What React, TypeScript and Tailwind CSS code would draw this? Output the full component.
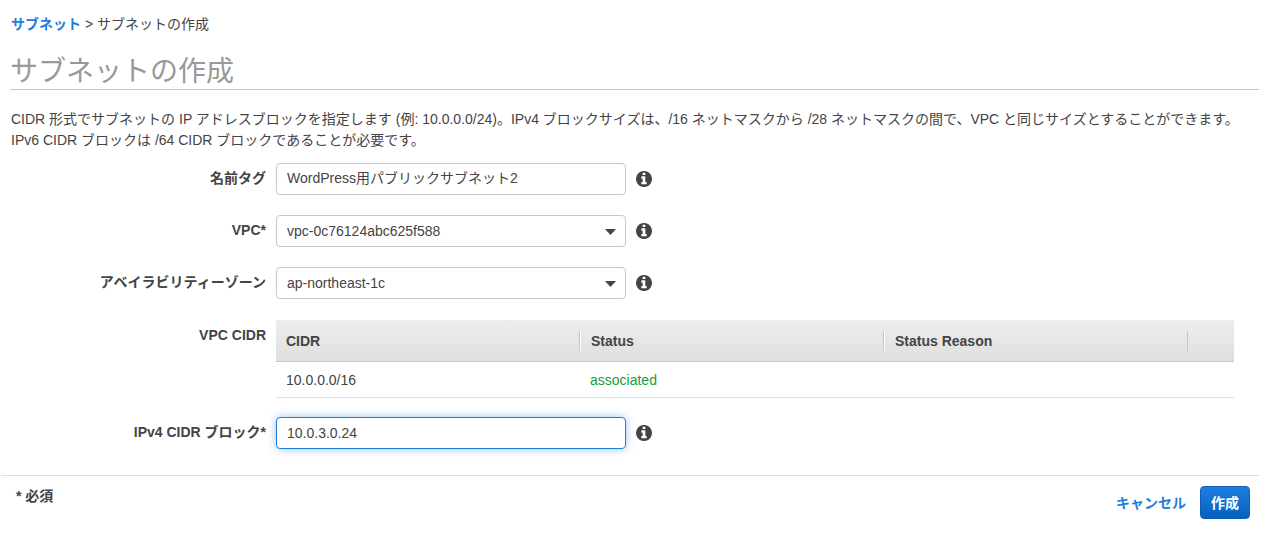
import { useState } from 'react'
import type { ReactNode } from 'react'
import clsx from 'clsx'

const VPCS = ['vpc-0c76124abc625f588']
const ZONES = ['ap-northeast-1a', 'ap-northeast-1c', 'ap-northeast-1d']
const CIDRS = [{ cidr: '10.0.0.0/16', status: 'associated', reason: '' }]

const fieldClass =
  'block w-full h-8 px-[10px] bg-white border border-[#c8c8c8] rounded text-sm text-[#444] focus:outline-none'

function Info() {
  return (
    <button type="button" aria-label="情報" className="shrink-0 text-[#444]">
      <svg width="16" height="16" viewBox="0 128 1536 1536" fill="currentColor" aria-hidden="true">
        <path d="M1024 1376v-160q0-14-9-23t-23-9h-96v-512q0-14-9-23t-23-9h-320q-14 0-23 9t-9 23v160q0 14 9 23t23 9h96v320h-96q-14 0-23 9t-9 23v160q0 14 9 23t23 9h448q14 0 23-9t9-23zm-128-896v-160q0-14-9-23t-23-9h-192q-14 0-23 9t-9 23v160q0 14 9 23t23 9h192q14 0 23-9t9-23zm640 416q0 209-103 385.500t-279.500 279.500-385.500 103-385.500-103-279.500-279.500-103-385.500 103-385.500 279.500-279.500 385.500-103 385.500 103 279.500 279.500 103 385.500z" />
      </svg>
    </button>
  )
}

function Row({ id, label, children }: { id: string; label: string; children: ReactNode }) {
  return (
    <>
      <label htmlFor={id} className="h-8 leading-[30px] text-right font-bold">{label}</label>
      <div className="flex items-center gap-[10px]">
        <div className="relative w-full max-w-[350px]">{children}</div>
        <Info />
      </div>
    </>
  )
}

function Caret() {
  return (
    <svg
      className="absolute right-[10px] top-[14px] pointer-events-none"
      width="11"
      height="6"
      viewBox="0 0 11 6"
      fill="#444"
      aria-hidden="true"
    >
      <path d="M0 0h11L5.500 6z" />
    </svg>
  )
}

export default function App() {
  const [name, setName] = useState('WordPress用パブリックサブネット2')
  const [vpc, setVpc] = useState(VPCS[0])
  const [zone, setZone] = useState('ap-northeast-1c')
  const [block, setBlock] = useState('10.0.3.0.24')

  return (
    <div className="bg-white pr-[3px] text-sm text-[#444] font-['Liberation_Sans','Noto_Sans_CJK_JP',sans-serif]">
      <div className="pl-[10px] pt-[14px]">
        <nav className="pl-px leading-[21px]">
          <a href="#subnets" className="font-bold text-[#1d7de0]">サブネット</a>
          {' > '}サブネットの作成
        </nav>
        <h1 className="mt-4 h-[39px] border-b border-[#c8c8c8] text-[28px] leading-[42px] text-[#999]">
          サブネットの作成
        </h1>
        <p className="mt-[19px] pl-px leading-[21px]">
          CIDR 形式でサブネットの IP アドレスブロックを指定します (例: 10.0.0.0/24)。IPv4 ブロックサイズは、/16 ネットマスクから /28 ネットマスクの間で、VPC と同じサイズとすることができます。IPv6 CIDR ブロックは /64 CIDR ブロックであることが必要です。
        </p>
      </div>

      <form>
        <div className="mt-3 grid grid-cols-[256px_minmax(0,1fr)] gap-x-[10px] gap-y-5 pl-[10px] pr-[25px]">
          <Row id="name" label="名前タグ">
            <input
              id="name"
              type="text"
              value={name}
              onChange={(e) => setName(e.target.value)}
              className={clsx(fieldClass, 'pb-1')}
            />
          </Row>

          <Row id="vpc" label="VPC*">
            <select
              id="vpc"
              value={vpc}
              onChange={(e) => setVpc(e.target.value)}
              className={clsx(fieldClass, 'appearance-none')}
            >
              {VPCS.map((v) => <option key={v}>{v}</option>)}
            </select>
            <Caret />
          </Row>

          <Row id="zone" label="アベイラビリティーゾーン">
            <select
              id="zone"
              value={zone}
              onChange={(e) => setZone(e.target.value)}
              className={clsx(fieldClass, 'appearance-none')}
            >
              {ZONES.map((z) => <option key={z}>{z}</option>)}
            </select>
            <Caret />
          </Row>

          {/* VPC CIDR 一覧 */}
          <div id="cidr-label" className="leading-8 text-right font-bold">VPC CIDR</div>
          <table
            aria-labelledby="cidr-label"
            className="mt-px -mb-px w-full table-fixed border-separate border-spacing-0 text-left"
          >
            <thead>
              <tr className="h-[42px] bg-linear-to-b from-[#eee] to-[#dedede]">
                {['CIDR', 'Status', 'Status Reason'].map((h, i) => (
                  <th key={h} className="border-b border-[#c8c8c8] p-0">
                    <div
                      className={clsx(
                        'flex h-5 items-center border-r border-r-[#c4c4c4] pl-[10px]',
                        i > 0 && 'border-l border-l-white',
                      )}
                    >
                      {h}
                    </div>
                  </th>
                ))}
                <td className="w-[46px] border-b border-[#c8c8c8]"></td>
              </tr>
            </thead>
            <tbody>
              {CIDRS.map((c) => (
                <tr key={c.cidr} className="h-9">
                  <td className="border-b border-[#ddd] px-[10px] py-0">{c.cidr}</td>
                  <td className="border-b border-[#ddd] px-[10px] py-0 text-[#1a9c3e]">{c.status}</td>
                  <td className="border-b border-[#ddd] px-[10px] py-0">{c.reason}</td>
                  <td className="border-b border-[#ddd]"></td>
                </tr>
              ))}
            </tbody>
          </table>

          <Row id="block" label="IPv4 CIDR ブロック*">
            <input
              id="block"
              type="text"
              value={block}
              onChange={(e) => setBlock(e.target.value)}
              className="block w-full h-8 px-[10px] bg-white border border-[#1d7de0] rounded text-sm text-[#444] shadow-[0_0_8px_rgba(29,125,224,0.45)] focus:outline-none"
            />
          </Row>
        </div>

        <div className="ml-px mt-[26px] flex justify-between border-t border-[#ddd] pl-[15px] pr-[9px] pt-[10px]">
          <span className="font-bold leading-[21px]">* 必須</span>
          <div className="flex items-center gap-[14px]">
            <a href="#cancel" className="font-bold text-[#1d7de0]">キャンセル</a>
            <button
              type="submit"
              className="h-[33px] w-[50px] rounded border border-[#0f5fb0] bg-linear-to-b from-[#1d7fe0] to-[#0561bf] font-bold text-white"
            >
              作成
            </button>
          </div>
        </div>
      </form>
    </div>
  )
}
